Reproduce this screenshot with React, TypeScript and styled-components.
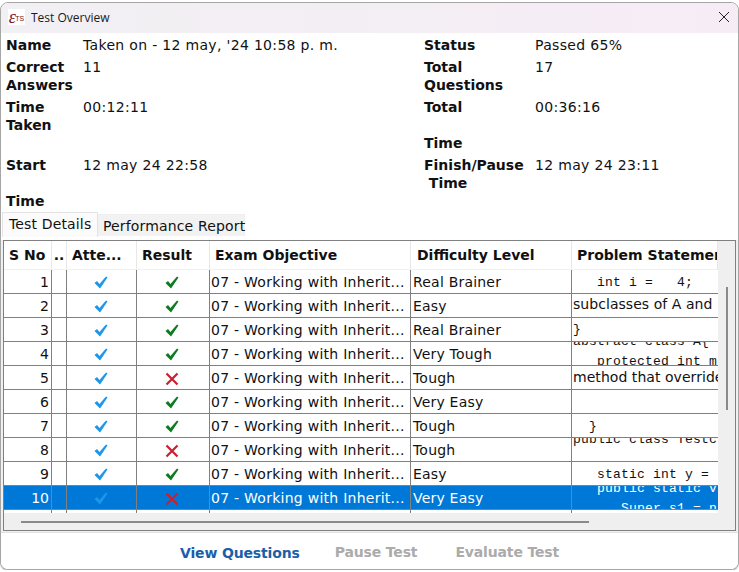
import React from 'react';
import styled, { createGlobalStyle } from 'styled-components';

const GlobalStyle = createGlobalStyle`
  html, body {
    margin: 0;
    padding: 0;
    background: #ffffff;
  }
  body {
    font-family: 'DejaVu Sans', Verdana, sans-serif;
    color: #111111;
    overflow: hidden;
  }
`;

const WindowStyled = styled.div`
  width: 739px;
  height: 568px;
  margin: 2px 0 0 0;
  display: flex;
  flex-direction: column;
  box-sizing: border-box;
  border: 1px solid #a6a6a6;
  border-radius: 8px;
  overflow: hidden;
  background: #ffffff;
  box-shadow: 0 1px 1px rgba(0, 0, 0, 0.25);
`;

const TitleBarStyled = styled.div`
  height: 30px;
  flex: none;
  box-sizing: border-box;
  display: flex;
  align-items: center;
  padding: 0 7px 2px 7px;
  background: linear-gradient(90deg, #f1f0f3 0%, #f3eef4 45%, #f6ecf6 100%);
`;

const LogoStyled = styled.span`
  width: 17px;
  height: 16px;
  margin-right: 6px;
  background: #ffffff;
  display: flex;
  align-items: center;
  justify-content: center;
  font-family: 'Liberation Serif', serif;
  font-style: italic;
  font-size: 18px;
  line-height: 16px;
  color: #7a1420;
  letter-spacing: -0.5px;

  small {
    font-family: 'Liberation Sans', sans-serif;
    font-style: normal;
    font-size: 7px;
    letter-spacing: 0;
    margin-top: 3px;
  }
`;

const TitleTextStyled = styled.span`
  flex: 1;
  font-family: 'Open Sans', sans-serif;
  font-size: 12px;
  color: #1a1a1a;
`;

const CloseButtonStyled = styled.button`
  width: 14px;
  height: 14px;
  padding: 0;
  border: 0;
  background: transparent;
  display: flex;
`;

const InfoGridStyled = styled.div`
  display: grid;
  grid-template-columns: 77px 341px 111px 1fr;
  padding: 3px 0 0 5px;
  font-size: 14px;
  line-height: 18px;
  flex: none;
`;

const InfoLabelStyled = styled.div<{ $gapBelow?: boolean }>`
  font-weight: 700;
  margin-bottom: ${({ $gapBelow }) => ($gapBelow ? 0 : 4)}px;
`;

const InfoValueStyled = styled.div`
  white-space: nowrap;
  letter-spacing: 0.32px;
`;

const PanelStyled = styled.div`
  flex: 1;
  min-height: 0;
  display: flex;
  flex-direction: column;
  background: #f0f0f0;
  padding: 0 2px 1px 2px;
  border-bottom: 1px solid #e2e2e2;
`;

const TabStripStyled = styled.div`
  display: flex;
  align-items: flex-start;
  height: 30px;
  flex: none;
  margin: 0 -2px;
  padding: 0 0 0 1px;
  background: #ffffff;
`;

const TabStyled = styled.div<{ $active?: boolean }>`
  font-size: 14px;
  letter-spacing: 0.15px;
  white-space: nowrap;
  box-sizing: border-box;
  width: ${({ $active }) => ($active ? 96 : 147)}px;
  height: ${({ $active }) => ($active ? 25 : 22)}px;
  margin-top: ${({ $active }) => ($active ? 2 : 4)}px;
  line-height: 23px;
  padding-left: ${({ $active }) => ($active ? 6 : 4)}px;
  background: ${({ $active }) => ($active ? '#fbfbfb' : '#f2f2f2')};
  border: 1px solid ${({ $active }) => ($active ? '#e4e4e4' : '#efefef')};
  border-bottom: 0;
`;

const TableFrameStyled = styled.div`
  flex: 1;
  min-height: 0;
  border: 1px solid #808080;
  display: flex;
  background: #efefef;
`;

const TableAreaStyled = styled.div`
  width: 714px;
  flex: none;
  display: flex;
  flex-direction: column;
`;

const columns = '48px 15px 70px 73px 201px 161px 146px';

const HeaderRowStyled = styled.div`
  display: grid;
  grid-template-columns: ${columns};
  height: 29px;
  background: #ffffff;
  flex: none;
`;

const HeaderCellStyled = styled.div<{ $center?: boolean; $inset?: number }>`
  font-size: 14px;
  font-weight: 700;
  line-height: 29px;
  white-space: nowrap;
  overflow: hidden;
  box-sizing: border-box;
  padding-left: ${({ $center, $inset }) => ($center ? 0 : $inset ?? 5)}px;
  text-align: ${({ $center }) => ($center ? 'center' : 'left')};
  border-right: 1px solid #e8e8e8;
  border-bottom: 1px solid #f0f0f0;
`;

const BodyStyled = styled.div`
  background: #ffffff;
  flex: none;
  height: 243px;
`;

const RowStyled = styled.div<{ $selected?: boolean }>`
  display: grid;
  grid-template-columns: ${columns};
  height: 24px;
  box-sizing: border-box;
  border-bottom: 1px solid #808080;
  background: ${({ $selected }) => ($selected ? '#0078d7' : '#ffffff')};
  color: ${({ $selected }) => ($selected ? '#ffffff' : '#111111')};
`;

const NumberCellStyled = styled.div`
  font-size: 14px;
  line-height: 25px;
  box-sizing: border-box;
  border-right: 1px solid #808080;
  padding-right: 2px;
  text-align: right;
`;

const IconCellStyled = styled.div`
  box-sizing: border-box;
  border-right: 1px solid #808080;
  padding-right: 2px;
  display: flex;
  align-items: center;
  justify-content: center;
`;

const TextCellStyled = styled.div<{ $inset?: number; $spacing?: number }>`
  font-size: 14px;
  line-height: 25px;
  letter-spacing: ${({ $spacing }) => $spacing ?? 0}px;
  box-sizing: border-box;
  border-right: 1px solid #808080;
  white-space: nowrap;
  overflow: hidden;
  padding-left: ${({ $inset }) => $inset ?? 1}px;
`;

const StatementCellStyled = styled.div`
  overflow: hidden;
  height: 23px;
  box-sizing: border-box;
  padding-left: 1px;
`;

const StatementLineStyled = styled.div<{ $mono?: boolean; $top?: number }>`
  font-family: ${({ $mono }) => ($mono ? "'Liberation Mono', monospace" : "'DejaVu Sans', sans-serif")};
  font-size: ${({ $mono }) => ($mono ? 13 : 14)}px;
  letter-spacing: ${({ $mono }) => ($mono ? 0.2 : 0.05)}px;
  line-height: 20px;
  white-space: pre;
  margin-top: ${({ $top }) => $top ?? 0}px;
`;

const TailRowStyled = styled.div`
  height: 3px;
  display: grid;
  grid-template-columns: ${columns};
  background: #ffffff;
`;

const TailCellStyled = styled.div`
  border-right: 1px solid #808080;
`;

const HorizontalTrackStyled = styled.div`
  flex: 1;
  padding: 8px 0 0 17px;
`;

const HorizontalThumbStyled = styled.div`
  width: 568px;
  height: 2px;
  background: #8a8a8a;
`;

const VerticalTrackStyled = styled.div`
  flex: 1;
  background: #efefef;
  padding: 46px 0 0 8px;
`;

const VerticalThumbStyled = styled.div`
  width: 2px;
  height: 123px;
  background: #8a8a8a;
`;

const FooterStyled = styled.div`
  height: 36px;
  flex: none;
  box-sizing: border-box;
  display: flex;
  align-items: center;
  padding: 1px 0 0 179px;
  background: #ffffff;
`;

const FooterButtonStyled = styled.span<{ $disabled?: boolean; $gap: number }>`
  font-size: 14px;
  font-weight: 700;
  letter-spacing: -0.15px;
  white-space: nowrap;
  color: ${({ $disabled }) => ($disabled ? '#ababab' : '#1a5fa8')};
  margin-right: ${({ $gap }) => $gap}px;
  position: relative;
  top: ${({ $disabled }) => ($disabled ? 0 : 1)}px;
`;

const CheckIcon = ({ color }: { color: string }) => (
  <svg width="14" height="13" viewBox="0 0 14 13">
    <path d="M0.5 7 L3 5 L5.5 8 L12 0.5 L13.5 1.5 L6 12.5 Z" fill={color} />
  </svg>
);

const CrossIcon = ({ color }: { color: string }) => (
  <svg width="14" height="14" viewBox="0 0 14 14">
    <path d="M1.5 1.5 L12.5 12.5 M12.5 1.5 L1.5 12.5" stroke={color} strokeWidth="2.2" fill="none" />
  </svg>
);

type Line = { text: string; mono?: boolean; top?: number };

type RowData = {
  no: number;
  passed: boolean;
  difficulty: string;
  lines: Line[];
};

const rows: RowData[] = [
  { no: 1, passed: true, difficulty: 'Real Brainer', lines: [{ text: '   int i =   4;', mono: true, top: 3 }] },
  {
    no: 2,
    passed: true,
    difficulty: 'Easy',
    lines: [{ text: 'subclasses of A and', top: 0 }, { text: ' override the m', top: -1 }],
  },
  { no: 3, passed: true, difficulty: 'Real Brainer', lines: [{ text: '}', mono: true, top: 2 }] },
  {
    no: 4,
    passed: true,
    difficulty: 'Very Tough',
    lines: [
      { text: 'abstract class A{', mono: true, top: -10 },
      { text: '   protected int m', mono: true, top: 0 },
    ],
  },
  { no: 5, passed: false, difficulty: 'Tough', lines: [{ text: 'method that override', top: 1 }] },
  { no: 6, passed: true, difficulty: 'Very Easy', lines: [] },
  { no: 7, passed: true, difficulty: 'Tough', lines: [{ text: '  }', mono: true, top: 3 }] },
  { no: 8, passed: false, difficulty: 'Tough', lines: [{ text: 'public class Testc', mono: true, top: -8 }] },
  { no: 9, passed: true, difficulty: 'Easy', lines: [{ text: '   static int y = ', mono: true, top: 3 }] },
  {
    no: 10,
    passed: false,
    difficulty: 'Very Easy',
    lines: [
      { text: '   public static v', mono: true, top: -7 },
      { text: '      Super s1 = n', mono: true, top: 0 },
    ],
  },
];

const App = () => {
  return (
    <>
      <GlobalStyle />
      <WindowStyled>
        <TitleBarStyled>
          <LogoStyled>
            ε<small>TS</small>
          </LogoStyled>
          <TitleTextStyled>Test Overview</TitleTextStyled>
          <CloseButtonStyled aria-label="Close">
            <svg width="14" height="14" viewBox="0 0 14 14">
              <path d="M2 2 L12 12 M12 2 L2 12" stroke="#222" strokeWidth="1" fill="none" />
            </svg>
          </CloseButtonStyled>
        </TitleBarStyled>

        <InfoGridStyled>
          <InfoLabelStyled>Name</InfoLabelStyled>
          <InfoValueStyled>Taken on - 12 may, '24 10:58 p. m.</InfoValueStyled>
          <InfoLabelStyled>Status</InfoLabelStyled>
          <InfoValueStyled>Passed 65%</InfoValueStyled>

          <InfoLabelStyled>
            Correct
            <br />
            Answers
          </InfoLabelStyled>
          <InfoValueStyled>11</InfoValueStyled>
          <InfoLabelStyled>
            Total
            <br />
            Questions
          </InfoLabelStyled>
          <InfoValueStyled>17</InfoValueStyled>

          <InfoLabelStyled>
            Time
            <br />
            Taken
          </InfoLabelStyled>
          <InfoValueStyled>00:12:11</InfoValueStyled>
          <InfoLabelStyled>
            Total
            <br />
            <br />
            Time
          </InfoLabelStyled>
          <InfoValueStyled>00:36:16</InfoValueStyled>

          <InfoLabelStyled $gapBelow>
            Start
            <br />
            <br />
            Time
          </InfoLabelStyled>
          <InfoValueStyled>12 may 24 22:58</InfoValueStyled>
          <InfoLabelStyled $gapBelow>
            Finish/Pause
            <br />
            &nbsp;Time
          </InfoLabelStyled>
          <InfoValueStyled>12 may 24 23:11</InfoValueStyled>
        </InfoGridStyled>

        <PanelStyled>
          <TabStripStyled>
            <TabStyled $active>Test Details</TabStyled>
            <TabStyled>Performance Report</TabStyled>
          </TabStripStyled>

          <TableFrameStyled>
            <TableAreaStyled>
              <HeaderRowStyled>
                <HeaderCellStyled>S No</HeaderCellStyled>
                <HeaderCellStyled $center>..</HeaderCellStyled>
                <HeaderCellStyled>Atte...</HeaderCellStyled>
                <HeaderCellStyled>Result</HeaderCellStyled>
                <HeaderCellStyled>Exam Objective</HeaderCellStyled>
                <HeaderCellStyled $inset={6}>Difficulty Level</HeaderCellStyled>
                <HeaderCellStyled>Problem Statement</HeaderCellStyled>
              </HeaderRowStyled>

              <BodyStyled>
                {rows.map((row) => {
                  const selected = row.no === 10;
                  return (
                    <RowStyled key={row.no} $selected={selected}>
                      <NumberCellStyled>{row.no}</NumberCellStyled>
                      <TextCellStyled />
                      <IconCellStyled>
                        <CheckIcon color="#1e96ea" />
                      </IconCellStyled>
                      <IconCellStyled>
                        {row.passed ? <CheckIcon color="#0f7a1f" /> : <CrossIcon color="#c9202e" />}
                      </IconCellStyled>
                      <TextCellStyled $spacing={0.26}>07 - Working with Inherit...</TextCellStyled>
                      <TextCellStyled $inset={2} $spacing={0.2}>
                        {row.difficulty}
                      </TextCellStyled>
                      <StatementCellStyled>
                        {row.lines.map((line) => (
                          <StatementLineStyled key={line.text} $mono={line.mono} $top={line.top}>
                            {line.text}
                          </StatementLineStyled>
                        ))}
                      </StatementCellStyled>
                    </RowStyled>
                  );
                })}
                <TailRowStyled>
                  <TailCellStyled />
                  <TailCellStyled />
                  <TailCellStyled />
                  <TailCellStyled />
                  <TailCellStyled />
                  <TailCellStyled />
                </TailRowStyled>
              </BodyStyled>

              <HorizontalTrackStyled>
                <HorizontalThumbStyled />
              </HorizontalTrackStyled>
            </TableAreaStyled>
            <VerticalTrackStyled>
              <VerticalThumbStyled />
            </VerticalTrackStyled>
          </TableFrameStyled>
        </PanelStyled>

        <FooterStyled>
          <FooterButtonStyled $gap={35}>View Questions</FooterButtonStyled>
          <FooterButtonStyled $disabled $gap={38}>
            Pause Test
          </FooterButtonStyled>
          <FooterButtonStyled $disabled $gap={0}>
            Evaluate Test
          </FooterButtonStyled>
        </FooterStyled>
      </WindowStyled>
    </>
  );
};

export default App;
